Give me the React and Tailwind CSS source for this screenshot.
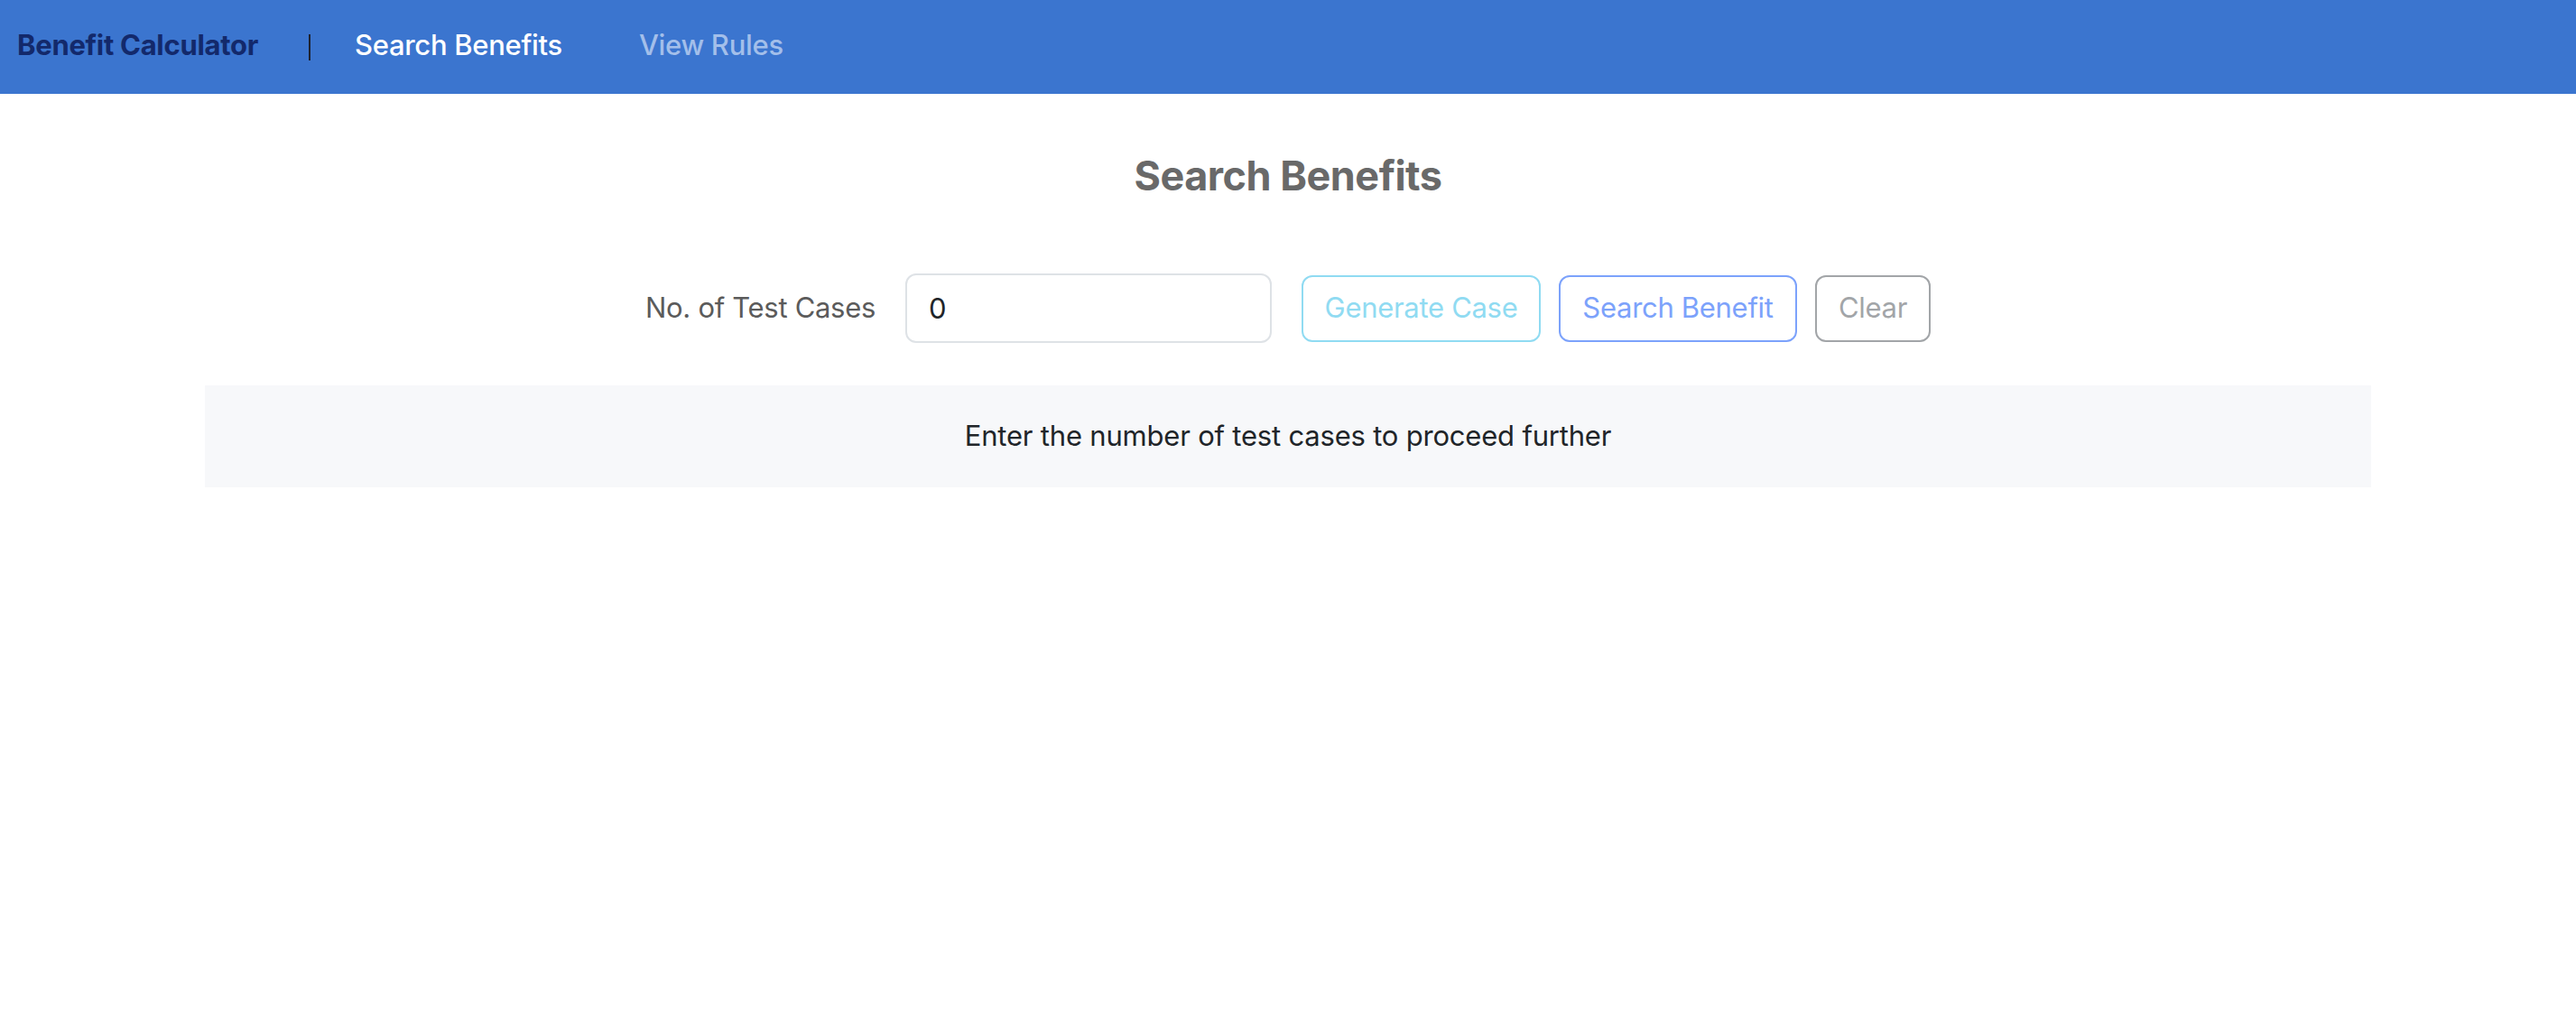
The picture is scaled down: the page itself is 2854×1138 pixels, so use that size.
import { useState } from "react";

export default function App() {
  const [count, setCount] = useState("0");

  return (
    <div className="min-h-screen bg-white font-['Inter','Liberation_Sans',sans-serif]">
      <nav className="flex h-[104px] items-center bg-[#3b75cf] pb-[3px] pl-[19px]">
        <span className="text-[31px] font-bold tracking-[-0.3px] text-[#13296b]">Benefit Calculator</span>
        <span className="ml-[56px] mt-[4px] h-[29px] w-[2px] bg-[#1e2330]" />
        <a className="ml-[49px] text-[31px] font-medium tracking-[-0.3px] text-white">Search Benefits</a>
        <a className="ml-[85px] text-[31px] font-medium tracking-[-0.3px] text-[#a3bfea]">View Rules</a>
      </nav>

      <main className="mx-auto w-[2400px]">
        <h2 className="mt-[64px] text-center text-[45px] leading-[1.2] font-bold tracking-[-0.5px] text-[#696969]">
          Search Benefits
        </h2>

        <div className="mt-[81px] flex items-center justify-center">
          <label className="text-[31px] text-[#5b5b5b] tracking-[-0.3px]">No. of Test Cases</label>
          <input
            value={count}
            onChange={(e) => setCount(e.target.value)}
            className="ml-[33px] h-[77px] w-[406px] rounded-[12px] border-2 border-[#dee2e6] px-[24px] text-[31px] text-[#212529] outline-none"
          />
          <button className="ml-[33px] h-[74px] w-[265px] rounded-[12px] border-2 border-[#90dbf2] text-[31px] tracking-[-0.3px] text-[#90dbf2]">
            Generate Case
          </button>
          <button className="ml-[20px] h-[74px] w-[264px] rounded-[12px] border-2 border-[#7ca2fb] text-[31px] tracking-[-0.3px] text-[#7ca2fb]">
            Search Benefit
          </button>
          <button className="ml-[20px] h-[74px] w-[128px] rounded-[12px] border-2 border-[#a2a5a8] text-[31px] tracking-[-0.3px] text-[#a2a5a8]">
            Clear
          </button>
        </div>

        <div className="mt-[47px] flex h-[113px] items-center justify-center bg-[#f7f8fa]">
          <p className="text-[31px] tracking-[-0.2px] text-[#212529]">Enter the number of test cases to proceed further</p>
        </div>
      </main>
    </div>
  );
}
